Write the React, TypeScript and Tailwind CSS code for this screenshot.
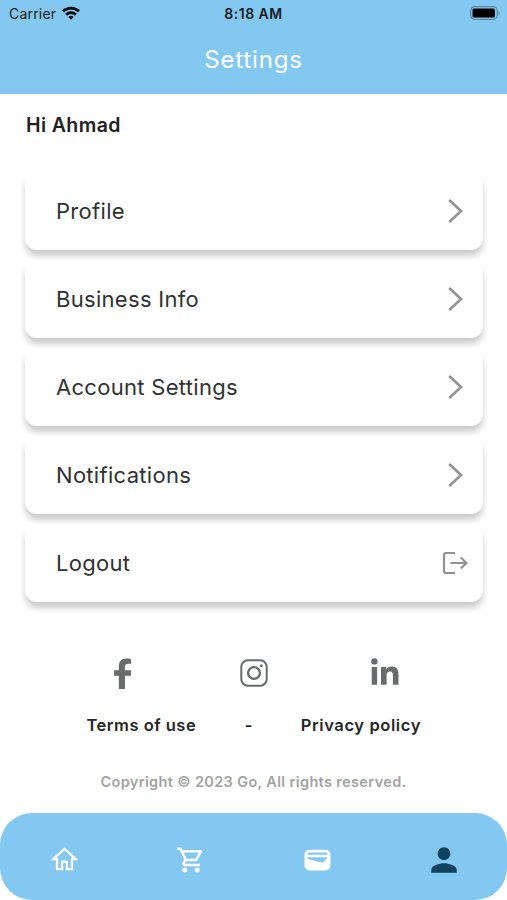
import type { ReactNode } from 'react';

function Chevron() {
  return (
    <svg className="mr-[20px] h-6 w-[15px]" viewBox="0 0 15 24" fill="none" stroke="#929292" strokeWidth="2.6">
      <path d="M1.2 1 13.2 12 1.2 23" />
    </svg>
  );
}

function LogoutIcon() {
  return (
    <svg className="mr-[15px] h-6 w-[26px]" viewBox="0 0 26 24" fill="none" stroke="#929292" strokeWidth="2.2">
      <path d="M13 2H4Q2 2 2 4V20Q2 22 4 22H13M8.5 12H25M18.8 6.5 24.5 12l-5.700 5.500" />
    </svg>
  );
}

function Row({ label, children }: { label: string; children: ReactNode }) {
  return (
    <button className="flex h-[78px] w-full items-center justify-between rounded-xl bg-white pl-[31px] text-left text-[22px] font-normal tracking-[0.3px] text-[#303233] shadow-[0_6px_6px_rgba(0,0,0,0.2)]">
      <span>{label}</span>
      {children}
    </button>
  );
}

function StatusBar() {
  return (
    <div className="grid h-7 grid-cols-3 items-center text-[14px] leading-7 text-[#101c24]">
      <div className="flex items-center gap-[6px] pl-[9px]">
        <span className="tracking-[0.2px]">Carrier</span>
        <svg className="mb-[2px] h-[14px] w-[18px]" viewBox="0 0 18 14" fill="none" stroke="#050a0d" strokeWidth="2.7">
          <path d="M1 5.300a11.500 11.500 0 0 1 16 0M4.100 8.700a7 7 0 0 1 9.800 0" />
          <path d="m9 13.800-2.700-2.900a4 4 0 0 1 5.400 0Z" fill="#050a0d" stroke="none" />
        </svg>
      </div>
      <span className="text-center text-[14px] font-semibold tracking-[0.5px]">8:18 AM</span>
      <svg className="mr-[6px] mb-[2px] h-[14px] w-[31px] justify-self-end" viewBox="0 0 31 14">
        <rect x=".7" y=".7" width="26.500" height="12.600" rx="3.800" fill="none" stroke="#58879f" strokeWidth="1.200" />
        <rect x="2.500" y="2.400" width="22.400" height="9.200" rx="1.500" fill="#000" />
        <path d="M28.700 4.700q2 2.300 0 4.600Z" fill="#58879f" />
      </svg>
    </div>
  );
}

export default function App() {
  return (
    <div className="flex h-[900px] w-[507px] flex-col overflow-hidden bg-white font-['Inter',sans-serif]">
      <header className="h-[94px] shrink-0 bg-[#83c8f1]">
        <StatusBar />
        <h1 className="pt-[14px] text-center text-[24px] leading-9 font-normal tracking-[0.85px] text-white">Settings</h1>
      </header>

      <main className="flex flex-1 flex-col">
        <h2 className="px-[26px] pt-[17px] text-[19.500px] leading-7 font-semibold tracking-[0.4px] text-[#202122]">Hi Ahmad</h2>
        <nav className="flex flex-col gap-[10px] pt-[33px] pr-[24px] pl-[25px]">
          <Row label="Profile"><Chevron /></Row>
          <Row label="Business Info"><Chevron /></Row>
          <Row label="Account Settings"><Chevron /></Row>
          <Row label="Notifications"><Chevron /></Row>
          <Row label="Logout"><LogoutIcon /></Row>
        </nav>

        <div className="mt-[55px] flex h-8 items-center text-[#686b6b]">
          <svg className="ml-[113px] h-[31px] w-[19px]" viewBox="0 0 18 31" preserveAspectRatio="none" fill="currentColor">
            <path d="M5.500 31V17.700H1V12.200h4.500V8.200C5.500 3.200 8.300.5 12.800.5c2.100 0 4.200.3 4.200.3v4.900h-2.400c-2.400 0-3.300 1.400-3.300 3v3.500H17V17.700h-5.700V31Z" />
          </svg>
          <svg className="ml-[108px] h-7 w-7" viewBox="0 0 28 28" fill="none" stroke="currentColor" strokeWidth="2">
            <rect x="1.300" y="1.300" width="25.400" height="25.400" rx="6.500" />
            <circle cx="14" cy="14" r="5.900" strokeWidth="2.300" />
            <circle cx="21.300" cy="6.800" r="1.500" fill="currentColor" stroke="none" />
          </svg>
          <svg className="mb-[3px] ml-[103px] h-[27px] w-7" viewBox="0 0 28 27" fill="currentColor">
            <circle cx="3.400" cy="3.400" r="3.200" />
            <path d="M.7 9H6.100V26.800H.7ZM10 9h5.300v2.400c.8-1.600 2.700-2.900 5.500-2.900 5.700 0 6.700 3.700 6.700 8.600v9.700h-5.600v-8.700c0-2.100 0-4.700-2.900-4.700s-3.400 2.200-3.400 4.600v8.800H10Z" />
          </svg>
        </div>

        <div className="mt-[22px] flex items-center justify-between pr-[86px] pl-[86.500px] text-[16.500px] leading-7 font-semibold text-[#252728]">
          <span className="tracking-[0.5px]">Terms of use</span>
          <span>-</span>
          <span className="tracking-[0.6px]">Privacy policy</span>
        </div>
        <p className="mt-[31px] text-center text-[14.500px] leading-6 font-semibold tracking-[0.36px] text-[#a2a2a2]">Copyright © 2023 Go, All rights reserved.</p>
      </main>

      <footer className="flex h-[87px] shrink-0 items-center rounded-[32px] bg-[#83c8f1] pt-[6px] text-white">
        <svg className="ml-[50px] h-[29px] w-[29px]" viewBox="0 0 24 24" fill="none" stroke="currentColor" strokeWidth="1.900">
          <path d="M2.700 11.600 12 3.300l9.300 8.300H18.200V20H14v-6.200h-4V20H5.800v-8.400Z" />
        </svg>
        <svg className="ml-[96.500px] h-[30px] w-[30px]" viewBox="0 0 24 24" fill="currentColor">
          <path d="M15.550 13c.75 0 1.410-.41 1.750-1.030l3.580-6.490A.996.996 0 0 0 20.010 4H5.210l-.94-2H1v2h2l3.600 7.590-1.350 2.440C4.520 15.370 5.480 17 7 17h12v-2H7l1.100-2h7.450zM6.160 6h12.150l-2.760 5H8.530L6.160 6zM7 18c-1.100 0-1.990.9-1.990 2S5.900 22 7 22s2-.9 2-2-.9-2-2-2zm10 0c-1.100 0-1.990.9-1.990 2s.89 2 1.990 2 2-.9 2-2-.9-2-2-2z" />
        </svg>
        <svg className="ml-[98px] h-[22px] w-[27px]" viewBox="0 0 27 22">
          <rect x=".5" y=".7" width="26" height="20.800" rx="5" fill="currentColor" />
          <path d="M3.500 5.700q0-2.100 2-2.100h16q2 0 2 2.100ZM3.500 8.200h20l-3.200 4.400q-1 1.300-2.700.8L4.500 10.300q-1-.3-1-2.100Z" fill="#83c8f1" />
        </svg>
        <svg className="ml-[94.500px] h-[38px] w-[38px] text-[#0d435f]" viewBox="0 0 24 24" fill="currentColor">
          <path d="M12 12c2.210 0 4-1.790 4-4s-1.790-4-4-4-4 1.790-4 4 1.790 4 4 4zm0 2c-2.670 0-8 1.340-8 4v2h16v-2c0-2.660-5.330-4-8-4z" />
        </svg>
      </footer>
    </div>
  );
}
